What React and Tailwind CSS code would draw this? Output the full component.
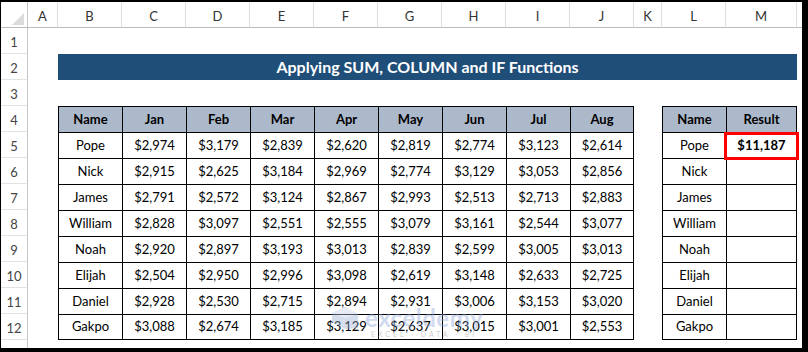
import React from 'react';

const letters = ['A', 'B', 'C', 'D', 'E', 'F', 'G', 'H', 'I', 'J', 'K', 'L', 'M'];
const months = ['Jan', 'Feb', 'Mar', 'Apr', 'May', 'Jun', 'Jul', 'Aug'];

const sales = [
  ['Pope', '$2,974', '$3,179', '$2,839', '$2,620', '$2,819', '$2,774', '$3,123', '$2,614'],
  ['Nick', '$2,915', '$2,625', '$3,184', '$2,969', '$2,774', '$3,129', '$3,053', '$2,856'],
  ['James', '$2,791', '$2,572', '$3,124', '$2,867', '$2,993', '$2,513', '$2,713', '$2,883'],
  ['William', '$2,828', '$3,097', '$2,551', '$2,555', '$3,079', '$3,161', '$2,544', '$3,077'],
  ['Noah', '$2,920', '$2,897', '$3,193', '$3,013', '$2,839', '$2,599', '$3,005', '$3,013'],
  ['Elijah', '$2,504', '$2,950', '$2,996', '$3,098', '$2,619', '$3,148', '$2,633', '$2,725'],
  ['Daniel', '$2,928', '$2,530', '$2,715', '$2,894', '$2,931', '$3,006', '$3,153', '$3,020'],
  ['Gakpo', '$3,088', '$2,674', '$3,185', '$3,129', '$2,637', '$3,015', '$3,001', '$2,553'],
];

const RowHead = ({ n }) => (
  <div className="flex items-end justify-center pb-[1px] border-r border-b border-r-[#c6c6c6] border-b-[#e2e2e2] text-[13px] text-[#444]">
    {n}
  </div>
);

const Blank = ({ span = '' }) => <div className={span} />;

// table cell: borders on left/top, closing edges on the last col/row
const Cell = ({ children, head, last, bottom, bold, extra = '' }) => (
  <div
    className={
      'flex justify-center border-l border-t border-black text-[13px] text-black ' +
      (head ? 'items-center bg-[#acb9ca] font-bold ' : 'items-end pb-[3px] ') +
      (last ? 'border-r ' : '') +
      (bottom ? 'border-b ' : '') +
      (bold ? 'font-bold ' : '') +
      extra
    }
  >
    {children}
  </div>
);

const App = () => {
  return (
    <div
      className="relative w-[808px] h-[352px] overflow-hidden bg-white border-l border-t-2 border-r-[6px] border-b-4 border-black"
      style={{ fontFamily: 'Lato, "Open Sans", sans-serif' }}
    >
      <div className="grid h-full grid-cols-[27px_30px_repeat(9,64px)_28px_64px_71px_1fr] grid-rows-[repeat(13,26px)_1fr]">
        {/* column headers */}
        <div className="relative border-r border-b border-r-[#c6c6c6] border-b-[#bcbcbc]">
          <svg className="absolute right-[3px] bottom-[2px]" width="12" height="12" viewBox="0 0 12 12">
            <polygon points="12,0 12,12 0,12" fill="#dcdcdc" />
          </svg>
        </div>
        {letters.map((l) => (
          <div
            key={l}
            className="flex items-end justify-center pb-[1px] border-r border-b border-r-[#dedede] border-b-[#bcbcbc] text-[13px] text-[#333]"
          >
            {l}
          </div>
        ))}
        <div className="border-b border-b-[#bcbcbc]" />

        {/* row 1 */}
        <RowHead n={1} />
        <Blank span="col-span-14" />

        {/* row 2: title banner */}
        <RowHead n={2} />
        <Blank />
        <div className="col-span-12 flex items-center justify-center bg-[#1f4e79] text-white font-bold text-[16px]">
          Applying SUM, COLUMN and IF Functions
        </div>
        <Blank />

        {/* row 3 */}
        <RowHead n={3} />
        <Blank span="col-span-14" />

        {/* row 4: headers */}
        <RowHead n={4} />
        <Blank />
        <Cell head>Name</Cell>
        {months.map((m, i) => (
          <Cell key={m} head last={i === months.length - 1}>
            {m}
          </Cell>
        ))}
        <Blank />
        <Cell head>Name</Cell>
        <Cell head last>Result</Cell>
        <Blank />

        {sales.map((row, r) => {
          const bottom = r === sales.length - 1;
          return (
            <React.Fragment key={row[0]}>
              <RowHead n={r + 5} />
              <Blank />
              {row.map((v, i) => (
                <Cell key={i} bottom={bottom} last={i === row.length - 1}>
                  {v}
                </Cell>
              ))}
              <Blank />
              <Cell bottom={bottom}>{row[0]}</Cell>
              {r === 0 ? (
                <Cell last bold extra="relative">
                  $11,187
                  <div className="absolute z-10 left-[-3px] right-[-3px] top-[-1px] bottom-[-2px] border-[3px] border-[#ff0000]" />
                </Cell>
              ) : (
                <Cell last bottom={bottom} />
              )}
              <Blank />
            </React.Fragment>
          );
        })}

        {/* partial row 13 */}
        <div className="border-r border-r-[#c6c6c6]" />
        <Blank span="col-span-14" />
      </div>

      {/* watermark */}
      <div className="pointer-events-none absolute left-[330px] top-[304px] flex items-start gap-[6px] opacity-40">
        <svg width="28" height="24" viewBox="0 0 28 24">
          <polygon points="14,1 27,8 27,22 14,23 1,16 1,7" fill="#9aaed6" />
          <polygon points="14,1 27,8 14,12 1,7" fill="#c3cfe8" />
        </svg>
        <div className="flex flex-col items-center leading-none">
          <span className="text-[24px] font-bold text-[#8ea5d6] tracking-[0.5px]">exceldemy</span>
          <span className="mt-[1px] text-[7px] tracking-[3px] text-[#8a8a8a]">EXCEL · DATA · BI</span>
        </div>
      </div>
    </div>
  );
};

export default App;
